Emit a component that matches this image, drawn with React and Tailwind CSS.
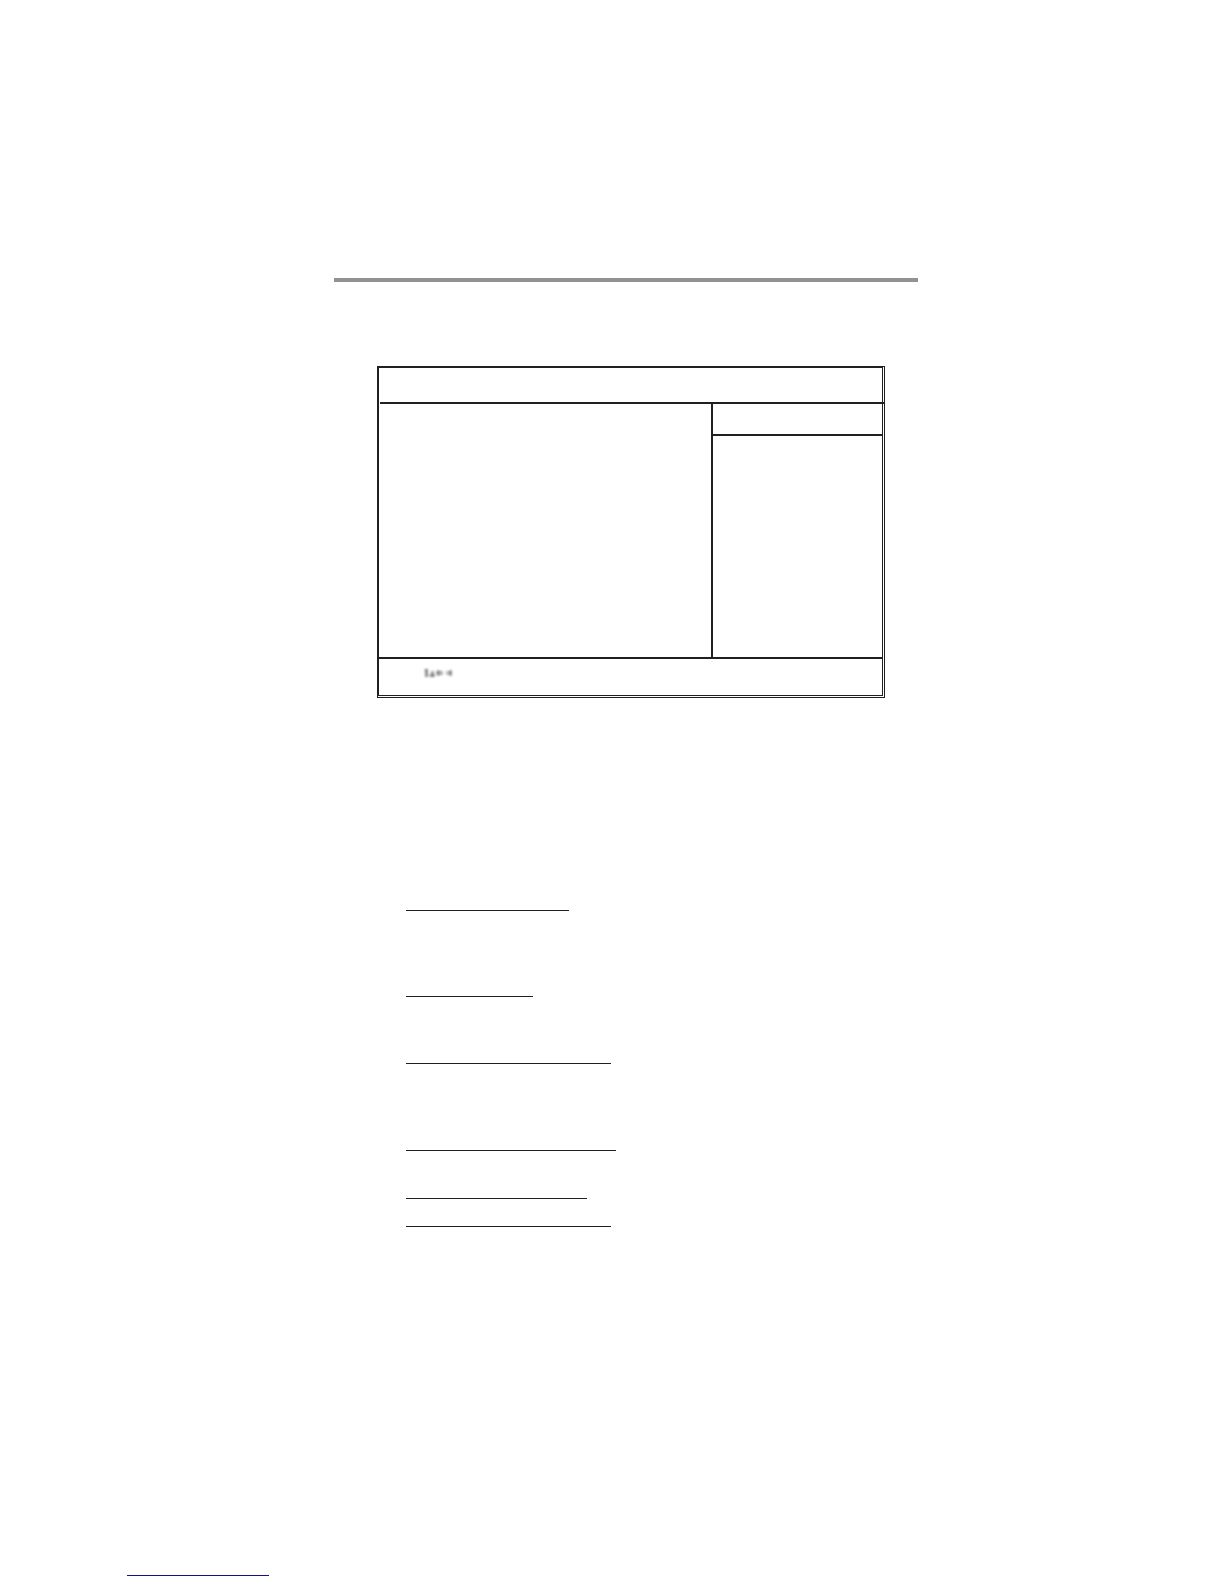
// Faded arrow glyphs of the key legend
function MoveKeys() {
  return (
    <svg width="32" height="16" viewBox="0 0 32 16" aria-hidden="true" className="blur-[1px]">
      <g fill="#444">
        <rect x="2" y="3" width="3" height="8" opacity="0.6" />
        <rect x="1" y="3" width="4" height="2" opacity="0.2" />
        <rect x="8" y="5" width="3" height="6" opacity="0.5" />
        <rect x="6" y="8" width="6" height="3" opacity="0.4" />
        <rect x="13" y="5" width="7" height="4" opacity="0.4" />
        <rect x="14" y="4" width="3" height="6" opacity="0.35" />
        <rect x="23" y="5" width="6" height="4" opacity="0.35" />
        <rect x="26" y="4" width="3" height="6" opacity="0.4" />
      </g>
    </svg>
  );
}

function SetupScreen() {
  return (
    <section className="ml-[43px] mr-[33px] border border-[#221f20] pr-px pb-px">
      <div className="border border-[#221f20]">
        {/* Title bar, its rule runs over the right frame */}
        <div className="ml-px -mr-[3px] h-9 border-b-2 border-[#221f20]" />

        <div className="flex h-[253px]">
          <div className="flex-1" />
          <div className="w-[171px] border-l-2 border-[#221f20]">
            <div className="h-8 border-b-2 border-[#221f20]" />
          </div>
        </div>

        {/* Key legend */}
        <div className="h-[38px] border-t-2 border-[#221f20] pt-[7px] pl-11">
          <MoveKeys />
        </div>
      </div>
    </section>
  );
}

export default function App() {
  return (
    <div className="bg-white pb-2">
      <main className="pt-[278px] pr-[306px] pl-[334px]">
        <hr className="mb-[84px] h-1 border-0 bg-[#929292]" />

        <SetupScreen />

        <div className="pt-[212px] pl-[72px]">
          <hr className="w-[163px] border-[#221f20]" />
          <hr className="mt-[85px] w-[127px] border-[#221f20]" />
          <hr className="mt-[66px] w-[205px] border-[#221f20]" />
          <hr className="mt-[86px] w-[210px] border-[#221f20]" />
          <hr className="mt-[47px] w-[181px] border-[#221f20]" />
          <hr className="mt-[27px] w-[205px] border-[#221f20]" />
        </div>
      </main>

      <footer className="pt-[348px] pl-[127px]">
        <hr className="w-[142px] border-[#14128a]" />
      </footer>
    </div>
  );
}
